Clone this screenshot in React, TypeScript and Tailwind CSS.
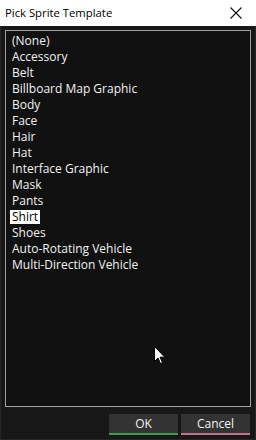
import React from "react";

const items = [
  "(None)",
  "Accessory",
  "Belt",
  "Billboard Map Graphic",
  "Body",
  "Face",
  "Hair",
  "Hat",
  "Interface Graphic",
  "Mask",
  "Pants",
  "Shirt",
  "Shoes",
  "Auto-Rotating Vehicle",
  "Multi-Direction Vehicle",
];

export default function App() {
  return (
    <div
      className="w-[256px] h-[440px] flex flex-col bg-[#171717] relative overflow-hidden"
      style={{ fontFamily: '"Open Sans", "Liberation Sans", Arial, sans-serif' }}
    >
      <div className="h-[26px] bg-white flex items-center justify-between pl-[5px] pr-[13px]">
        <span className="text-[11.3px] text-black">Pick Sprite Template</span>
        <svg width="14" height="14" viewBox="0 0 14 14">
          <path d="M1.5 1.5 L12.5 12.5 M12.5 1.5 L1.5 12.5" stroke="#111" strokeWidth="1.1" />
        </svg>
      </div>
      <div className="flex-1 flex flex-col border-x border-b border-[#262626] px-[4px]">
        <div className="mt-[4px] h-[377px] border border-[#a0a0a0] bg-[#111111] pt-[2px] pl-[4px]">
          {items.map((it) => (
            <div key={it} className="h-[16px] flex items-center">
              <span
                className={
                  it === "Shirt"
                    ? "text-[12px] leading-[14px] bg-white text-black px-[2px]"
                    : "text-[12px] leading-[14px] text-[#f2f2f2] px-[2px]"
                }
              >
                {it}
              </span>
            </div>
          ))}
        </div>
        <div className="flex justify-end gap-[3px] mt-[7px] pr-[1px]">
          <button className="w-[69px] h-[21px] bg-[#333333] border-b-2 border-[#3f9a4a] text-[12px] text-[#f2f2f2] flex items-center justify-center">
            OK
          </button>
          <button className="w-[69px] h-[21px] bg-[#333333] border-b-2 border-[#c07088] text-[12px] text-[#f2f2f2] flex items-center justify-center">
            Cancel
          </button>
        </div>
      </div>
      <svg className="absolute left-[154px] top-[346px]" width="12" height="19" viewBox="0 0 12 19">
        <path d="M0.5 0.5 L0.5 15.5 L4 12 L6.5 17.5 L8.5 16.5 L6 11.2 L10.8 11.2 Z" fill="#fff" stroke="#000" strokeWidth="1" />
      </svg>
    </div>
  );
}
